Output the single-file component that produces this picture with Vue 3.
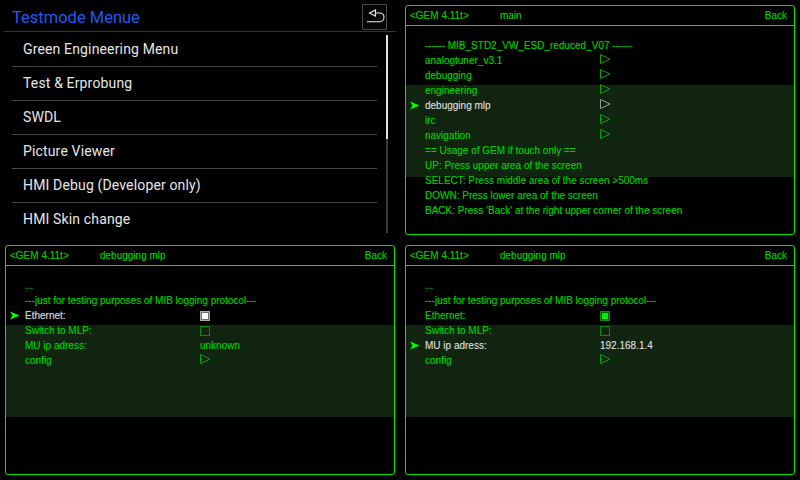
<template>
  <div class="screen">
    <!-- testmode menu -->
    <div class="menu-view">
      <div class="menu-header">
        <span class="menu-title">Testmode Menue</span>
        <button class="back-btn">
          <svg width="23" height="24" viewBox="0 0 23 24">
            <path d="M12 8H16C19.5 8 21 10 21 12C21 15 19 16.7 17 16.7H4" fill="none" stroke="#e8e8e8" stroke-width="1.1" />
            <path d="M6.5 8L12.5 5V11Z" fill="none" stroke="#e8e8e8" stroke-width="1.1" />
          </svg>
        </button>
      </div>
      <div class="menu-body">
        <div class="menu-list">
          <div v-for="item in menuItems" :key="item" class="menu-item">{{ item }}</div>
        </div>
        <div class="scrollbar"><div class="scroll-thumb"></div></div>
      </div>
    </div>

    <!-- GEM panels -->
    <div v-for="panel in panels" :key="panel.id" class="gem-cell">
      <div class="gem-panel">
        <div class="gem-header">
          <span class="gem-version">&lt;GEM 4.11t&gt;</span>
          <span class="gem-title">{{ panel.title }}</span>
          <span class="gem-back">Back</span>
        </div>
        <div class="gem-body">
          <div class="gem-band"></div>
          <div
            v-for="(row, index) in panel.rows"
            :key="index"
            class="gem-row"
            :class="{ selected: row.selected }"
          >
            <span class="marker">
              <svg v-if="row.selected" width="10" height="9" viewBox="0 0 10 9">
                <polygon points="0,0.5 9.5,4.5 0,8.5 2.5,4.5" fill="#00ff00" />
              </svg>
            </span>
            <span class="label">{{ row.label }}</span>
            <span class="value">
              <svg v-if="row.type === 'arrow'" class="arrow" width="11" height="11" viewBox="0 0 11 11">
                <polygon points="0.5,0.5 10,5 0.5,9.5" fill="none" stroke="currentColor" stroke-width="1" />
              </svg>
              <span v-else-if="row.type === 'check'" class="check" :class="{ on: row.checked }"></span>
              <template v-else>{{ row.value }}</template>
            </span>
          </div>
        </div>
      </div>
    </div>
  </div>
</template>

<script setup>
const menuItems = [
  'Green Engineering Menu',
  'Test & Erprobung',
  'SWDL',
  'Picture Viewer',
  'HMI Debug (Developer only)',
  'HMI Skin change'
]

const mlpRows = (selected, ip, ethernetOn) => [
  { label: '...' },
  { label: '---just for testing purposes of MIB logging protocol---' },
  { label: 'Ethernet:', type: 'check', checked: ethernetOn, selected: selected === 'ethernet' },
  { label: 'Switch to MLP:', type: 'check' },
  { label: 'MU ip adress:', value: ip, selected: selected === 'ip' },
  { label: 'config', type: 'arrow' }
]

const panels = [
  {
    id: 'main',
    title: 'main',
    rows: [
      { label: '------ MIB_STD2_VW_ESD_reduced_V07 ------' },
      { label: 'analogtuner_v3.1', type: 'arrow' },
      { label: 'debugging', type: 'arrow' },
      { label: 'engineering', type: 'arrow' },
      { label: 'debugging mlp', type: 'arrow', selected: true },
      { label: 'irc', type: 'arrow' },
      { label: 'navigation', type: 'arrow' },
      { label: '== Usage of GEM if touch only ==' },
      { label: 'UP: Press upper area of the screen' },
      { label: 'SELECT: Press middle area of the screen >500ms' },
      { label: 'DOWN: Press lower area of the screen' },
      { label: "BACK: Press 'Back' at the right upper corner of the screen" }
    ]
  },
  { id: 'mlp-eth', title: 'debugging mlp', rows: mlpRows('ethernet', 'unknown', true) },
  { id: 'mlp-ip', title: 'debugging mlp', rows: mlpRows('ip', '192.168.1.4', true) }
]
</script>

<style>
html,
body {
  margin: 0;
  background: #000;
}
</style>

<style scoped>
.screen {
  width: 800px;
  height: 480px;
  display: grid;
  grid-template-columns: 400px 400px;
  grid-template-rows: 240px 240px;
  background: #000;
  overflow: hidden;
  font-family: "Liberation Sans", Arial, sans-serif;
}

/* left top menu */
.menu-view {
  padding: 3px 4px 0;
  box-sizing: border-box;
  height: 240px;
  overflow: hidden;
}

.menu-header {
  height: 28px;
  display: flex;
  align-items: center;
  justify-content: space-between;
  padding: 0 9px 0 8px;
  border-bottom: 1px solid #12388c;
}

.menu-title {
  font-family: Roboto, sans-serif;
  font-size: 16.5px;
  color: #1c5cf0;
}

.back-btn {
  width: 25px;
  height: 26px;
  margin-top: -1px;
  padding: 0;
  box-sizing: border-box;
  display: block;
  background: #050505;
  border: 1px solid #4a4a4a;
  border-radius: 1px;
}

.back-btn svg {
  display: block;
}

.menu-body {
  display: flex;
  padding-left: 8px;
}

.menu-list {
  width: 365px;
  padding-top: 1px;
}

.menu-item {
  height: 33px;
  line-height: 33px;
  padding-left: 11px;
  border-bottom: 1px solid #464646;
  font-family: Roboto, sans-serif;
  font-size: 14px;
  letter-spacing: 0.15px;
  color: #e6e6e6;
  white-space: nowrap;
}

.menu-item:last-child {
  border-bottom: none;
}

.scrollbar {
  width: 1.5px;
  height: 198px;
  margin: 3px 0 0 9px;
  background: #3a3a3a;
}

.scroll-thumb {
  height: 104px;
  background: #e0e0e0;
}

/* GEM panels */
.gem-cell {
  padding: 5px;
  box-sizing: border-box;
}

.gem-panel {
  height: 230px;
  box-sizing: border-box;
  border: 1px solid #00e800;
  border-radius: 3px;
  font-size: 10px;
  color: #00cc00;
  text-shadow: 0 0 1px rgba(0, 204, 0, 0.45);
}

.gem-header {
  height: 19px;
  display: flex;
  align-items: center;
  padding: 0 7px 0 4px;
  border-bottom: 1px solid #00e800;
}

.gem-version {
  width: 90px;
}

.gem-title {
  flex: 1;
}

.gem-body {
  position: relative;
  padding-top: 12px;
}

.gem-band {
  position: absolute;
  left: 0;
  right: 0;
  top: 59px;
  height: 92px;
  background: #10240f;
}

.gem-row {
  position: relative;
  height: 15px;
  line-height: 15px;
  display: grid;
  grid-template-columns: 19px 175px 1fr;
  align-items: center;
  white-space: nowrap;
}

.gem-row.selected {
  color: #dcdcdc;
  text-shadow: 0 0 1px rgba(220, 220, 220, 0.4);
}

.marker {
  display: flex;
  padding-left: 4px;
}

.value {
  display: flex;
  align-items: center;
}

.arrow {
  display: block;
  color: #0aa00a;
  margin-top: -2px;
}

.selected .arrow {
  color: #999;
}

.check {
  width: 10px;
  height: 10px;
  box-sizing: border-box;
  border: 1px solid #0a8a0a;
  padding: 1px;
  display: block;
}

.check.on {
  background: #075c07;
}

.check.on::after {
  content: '';
  display: block;
  width: 6px;
  height: 6px;
  background: #00f000;
}

.selected .check {
  border-color: #aaa;
}

.selected .check.on {
  background: #707070;
}

.selected .check.on::after {
  background: #fff;
}
</style>
